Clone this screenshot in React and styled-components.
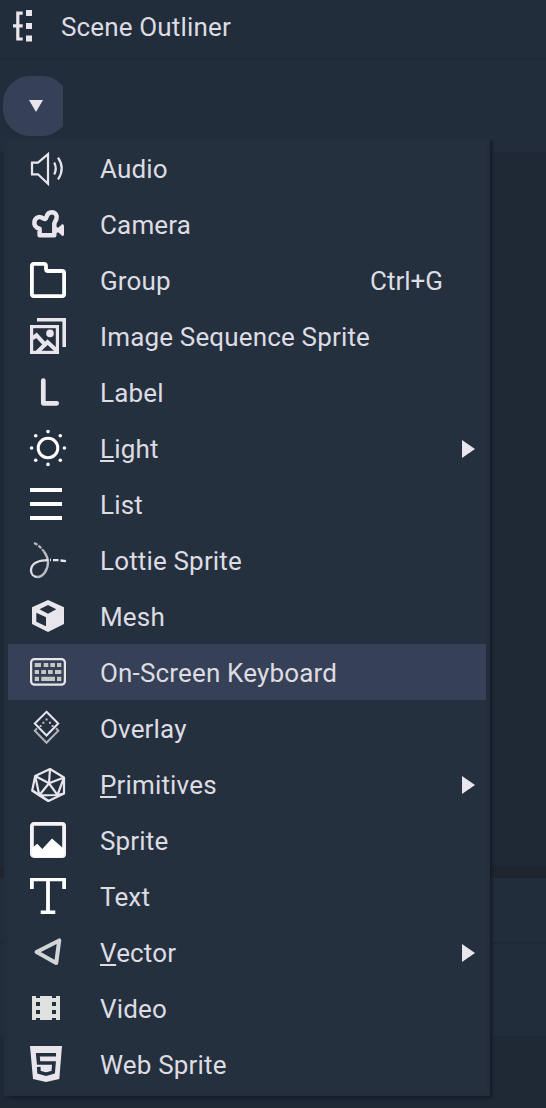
import React from "react";
import styled, { createGlobalStyle } from "styled-components";

const GlobalStyle = createGlobalStyle`
  * { box-sizing: border-box; }
  body { margin: 0; background: #1e2935; overflow: hidden; }
`;

const Screen = styled.main`
  position: relative;
  display: flex;
  flex-direction: column;
  width: 546px;
  height: 1108px;
  overflow: hidden;
  background: #1e2935;
  color: #dddce2;
  font-family: Roboto, "Liberation Sans", sans-serif;
  font-size: 26px;
  line-height: 30px;
`;

const PanelTitle = styled.header`
  display: flex;
  align-items: center;
  gap: 28px;
  height: 60px;
  padding: 0 0 8px 13px;
  border-bottom: 2px solid #1e2836;
  background: #222d3c;
`;

const OutlinerIcon = styled.svg`
  flex: none;
  width: 20px;
  height: 32px;
  margin-top: 2px;
`;

const TitleText = styled.h1`
  margin: 0;
  padding-top: 3px;
  font-size: 26px;
  font-weight: 400;
  line-height: 30px;
  letter-spacing: 0.15px;
`;

const Toolbar = styled.div`
  height: 92px;
  padding: 16px 0 0 3px;
  background: #222d3c;
`;

const ButtonClip = styled.div`
  width: 60px;
  height: 60px;
  overflow: hidden;
`;

const AddButton = styled.button`
  display: flex;
  align-items: center;
  width: 66px;
  height: 60px;
  padding: 0 0 0 26px;
  border: 0;
  border-radius: 27px;
  background: #364157;
`;

const TreeArea = styled.div`
  height: 714px;
  background: #1e2935;
`;

const Splitter = styled.div`
  height: 12px;
  background: #1f252f;
`;

const LowerTitle = styled.div`
  height: 66px;
  border-bottom: 2px solid #1e2836;
  background: #222d3c;
`;

const LowerToolbar = styled.div`
  height: 92px;
  background: #222d3c;
`;

const Menu = styled.ul`
  position: absolute;
  top: 136px;
  left: 4px;
  width: 486px;
  margin: 0;
  padding: 0;
  list-style: none;
  border: 4px solid #232e3d;
  border-top-color: #222d3c;
  background: #25303f;
  box-shadow: 3px 3px 3px -1px #141b26;
  clip-path: inset(4px -8px -8px 0);
`;

const MenuItem = styled.li`
  display: flex;
  align-items: center;
  height: 56px;
  padding: 0 11px 0 22px;
  background: ${(p) => (p.$active ? "#364157" : "transparent")};
`;

const Icon = styled.svg`
  flex: none;
  width: 36px;
  height: 36px;
  margin-right: 34px;
  overflow: visible;
`;

const Label = styled.span`
  flex: 1;
  padding-top: 2px;
  white-space: nowrap;
  letter-spacing: 0.16px;
`;

const AccessKey = styled.span`
  text-decoration: underline;
  text-decoration-thickness: 2px;
  text-underline-offset: 2px;
  text-decoration-skip-ink: none;
`;

const Shortcut = styled.span`
  padding: 2px 32px 0 0;
`;

const SubmenuArrow = styled.svg`
  flex: none;
  width: 13px;
  height: 20px;
  margin-top: 2px;
`;

const C = "#e9e5ed";

const icons = {
  audio: (
    <g fill="none" stroke={C} strokeWidth="2.2">
      <path d="M2 12.7H8L18 4.2V33.8L8 24.3H2Z" />
      <path d="M24.2 12.5Q27.3 18.5 24.2 24.5M28 7.7Q35.5 18.5 28 29.5" />
    </g>
  ),
  camera: (
    <g>
      <path d="M9.6 29.3V22.8C5.5 21.8 4 18.8 4.4 16C5 11.6 9.3 9.8 12.8 12.2C14.7 13.5 16.1 13 16.6 10.8C17.3 8 19.2 6.3 21.8 6.3C25.3 6.3 27.6 9.5 26.4 12.9C25.6 15.2 24.1 16.6 24.3 18.5V29.3Z" fill="none" stroke={C} strokeWidth="4.5" strokeLinejoin="round" />
      <path d="M25 21L28.5 21.5L32 18.3Q34 18 34 20V28.5Q34 30.3 32 29.8L28.5 26.5L25 27Z" fill={C} />
    </g>
  ),
  group: (
    <path d="M1.9 4Q1.9 1.9 4 1.9H14Q16 1.9 16 4V7Q16 9 18 9H32Q34.1 9 34.1 11V32Q34.1 34.1 32 34.1H4Q1.9 34.1 1.9 32Z" fill="none" stroke="#fff" strokeWidth="3.8" />
  ),
  sequence: (
    <g fill="none" stroke={C} strokeWidth="3.6">
      <path d="M7 1.8H34.2V29" />
      <rect x="1.6" y="8.6" width="25.8" height="25.8" strokeWidth="3.2" />
      <circle cx="20" cy="15.4" r="3.8" fill={C} stroke="none" />
      <path d="M2.5 20.5L6.5 17.3L16.5 28.2M7 34.5L17.5 24L27 33" strokeWidth="4" />
    </g>
  ),
  label: (
    <path d="M13.3 6.7V29.3H26.7" fill="none" stroke={C} strokeWidth="4.7" strokeLinecap="round" strokeLinejoin="round" />
  ),
  light: (
    <g fill="#fff">
      <circle cx="18" cy="18" r="9.8" fill="none" stroke="#fff" strokeWidth="3" />
      {[[18, 1.6], [18, 34.4], [1.6, 18], [34.4, 18], [5.7, 5.7], [30.3, 5.7], [5.7, 30.3], [30.3, 30.3]].map(([x, y]) => (
        <circle key={`${x}-${y}`} cx={x} cy={y} r="1.8" />
      ))}
    </g>
  ),
  list: <path d="M0 2H32V6H0ZM0 16H32V20H0ZM0 30H32V34H0Z" fill="#fff" />,
  lottie: (
    <g fill="none" strokeWidth="2.3">
      <path d="M4 1Q9 3 14 9.5" stroke="#b6b7bd" strokeDasharray="4 1.2" />
      <path d="M14 9.5Q18 15.5 18 20C18 28 13 35 7.5 35" stroke="#bdbdc3" />
      <path d="M7.5 35C3.5 35 1 32 1 28.5C1 23 6 18.5 15 18.3" stroke="#e0dee4" />
      <path d="M15 18.3L18.2 18M20 18H21M23 18.1H28.5M30.5 18.5L36 19.2" stroke={C} />
    </g>
  ),
  mesh: (
    <path fillRule="evenodd" d="M18 2L34 9.3V26L18 34L2 26V9.3ZM18 7L9.5 11.3L18 15.7L26.3 11.3ZM6.3 14.7V23.7L16 28.2V19.3Z" fill={C} />
  ),
  keyboard: (
    <g>
      <rect x="1.1" y="5.1" width="33.8" height="25.6" rx="3.5" fill="none" stroke={C} strokeWidth="2.2" />
      <path d="M4.7 9H11V13H4.7ZM13.7 9H18.3V13H13.7ZM20.3 9H25V13H20.3ZM27 9H31.3V13H27ZM4.7 16H9V20H4.7ZM11.3 16H16V20H11.3ZM18 16H22.7V20H18ZM25 16H31.3V20H25ZM4.7 22.8H9V27H4.7ZM11.3 22.8H25V27H11.3ZM27 22.8H31.3V27H27Z" fill="#c8c8c3" />
    </g>
  ),
  overlay: (
    <g fill="none" strokeWidth="2">
      <path d="M7 18.3L4.8 20.8L16.5 32.8L28.3 20.8L26 18.3" stroke="#b0b1b8" />
      <path d="M16.5 1.8L28.2 13.5L16.5 25.5L4.8 13.5Z" stroke={C} />
      <path d="M15.6 9.5h2M12.4 12.7h2M18.9 12.7h2M9.6 16h2M21.6 16h2" stroke="#c0c0c6" />
    </g>
  ),
  primitives: (
    <g fill="none" stroke={C} strokeWidth="2.2" strokeLinejoin="round">
      <path d="M20 3L34 11.5V27.5L18.5 35L2.2 24.5L5.2 10Z" />
      <path d="M19 17.3L20 3M19 17.3L34 11.5M19 17.3L27.5 29M19 17.3L9.3 29.3M19 17.3L5.2 10M18.5 35L9.3 29.3L27.5 29M5.2 10L9.3 29.3L2.2 24.5M34 11.5L27.5 29L34 27.5" />
    </g>
  ),
  sprite: (
    <g>
      <rect x="1.9" y="1.9" width="32.2" height="32.2" rx="2" fill="none" stroke="#f5f3f8" strokeWidth="3.8" />
      <path d="M2 26L7.2 21.8L12.3 27L22 16.5L34 27V33Q34 35 32 35H4Q2 35 2 33Z" fill="#fff" />
    </g>
  ),
  text: <path d="M0 0H36V11H32.2V3.3H19.9V32.5H25.3V36H10.7V32.5H16.1V3.3H3.8V11H0Z" fill="#fff" />,
  vector: (
    <path d="M6.6 18L29.2 6.5L26.2 29Z" fill="none" stroke="#d2d5d7" strokeWidth="4.1" strokeLinejoin="round" />
  ),
  video: (
    <path fillRule="evenodd" d="M2 6H6V8H10V6H22V8H26V6H30V30H26V28H22V30H10V28H6V30H2ZM6 12V16H10V12ZM6 20V24H10V20ZM22 12V16H26V12ZM22 20V24H26V20Z" fill="#e0e2e0" />
  ),
  web: (
    <g>
      <path d="M0 0H32L29.3 33L16 36L3 33Z" fill={C} />
      <path d="M26 8.8H7.8L8.6 17H24L23.2 26.2L16 28.2L9 26.2L8.7 20.8" fill="none" stroke="#25303f" strokeWidth="3.6" />
    </g>
  ),
};

const items = [
  { icon: "audio", label: "Audio" },
  { icon: "camera", label: "Camera" },
  { icon: "group", label: "Group", shortcut: "Ctrl+G" },
  { icon: "sequence", label: "Image Sequence Sprite" },
  { icon: "label", label: "Label" },
  { icon: "light", label: "Light", submenu: true },
  { icon: "list", label: "List" },
  { icon: "lottie", label: "Lottie Sprite" },
  { icon: "mesh", label: "Mesh" },
  { icon: "keyboard", label: "On-Screen Keyboard", active: true },
  { icon: "overlay", label: "Overlay" },
  { icon: "primitives", label: "Primitives", submenu: true },
  { icon: "sprite", label: "Sprite" },
  { icon: "text", label: "Text" },
  { icon: "vector", label: "Vector", submenu: true },
  { icon: "video", label: "Video" },
  { icon: "web", label: "Web Sprite" },
];

export default function App() {
  return (
    <>
      <GlobalStyle />
      <Screen>
        <PanelTitle>
          <OutlinerIcon viewBox="0 0 20 32">
            <path d="M13 0H19V6H13ZM13 13H19V19H13ZM13 25.5H19V31.5H13Z" fill={C} />
            <path d="M9.7 3.2H4.8V29H9.7M0 15.8H9.7" fill="none" stroke={C} strokeWidth="3.2" />
          </OutlinerIcon>
          <TitleText>Scene Outliner</TitleText>
        </PanelTitle>
        <Toolbar>
          <ButtonClip>
            <AddButton aria-label="Add">
              <svg width="14" height="12" viewBox="0 0 14 12">
                <path d="M0 0H14L7 12Z" fill={C} />
              </svg>
            </AddButton>
          </ButtonClip>
        </Toolbar>
        <TreeArea />
        <Splitter />
        <LowerTitle />
        <LowerToolbar />
        <Menu>
          {items.map(({ icon, label, shortcut, submenu, active }) => (
            <MenuItem key={icon} $active={active}>
              <Icon viewBox="0 0 36 36">{icons[icon]}</Icon>
              <Label>
                {submenu ? (
                  <>
                    <AccessKey>{label[0]}</AccessKey>
                    {label.slice(1)}
                  </>
                ) : (
                  label
                )}
              </Label>
              {shortcut && <Shortcut>{shortcut}</Shortcut>}
              {submenu && (
                <SubmenuArrow viewBox="0 0 13 20">
                  <path d="M0 1L13 10L0 19Z" fill={C} />
                </SubmenuArrow>
              )}
            </MenuItem>
          ))}
        </Menu>
      </Screen>
    </>
  );
}
